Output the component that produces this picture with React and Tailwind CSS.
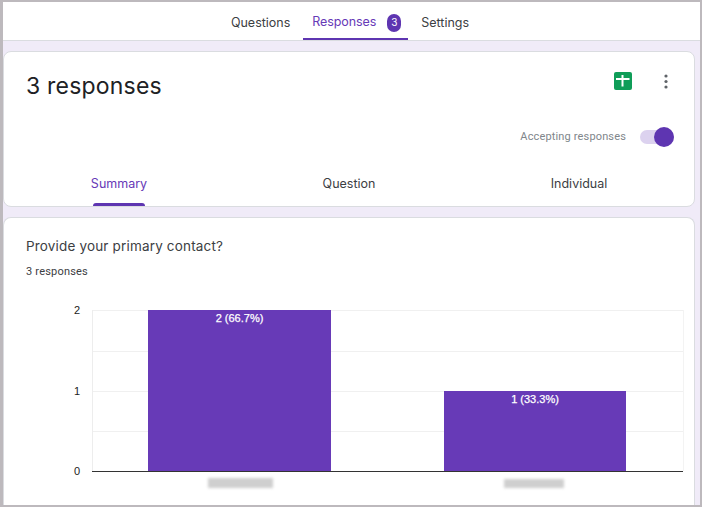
export default function App() {
  return (
    <div className="w-[702px] h-[507px] overflow-hidden flex flex-col bg-[#f0ebf8] border-t-2 border-l-[3px] border-r-[2px] border-b-[2px] border-[#bdb9bd] font-['Roboto',sans-serif]">
      <nav className="h-[39px] shrink-0 -ml-[3px] -mr-[2px] bg-white border-b border-[#dadce0] flex justify-center pl-[3px]">
        <div className="flex items-stretch text-[12.5px] font-['Inter',sans-serif]">
          <div className="flex items-center pt-[5px] px-2 mr-[5px] text-[#3c4043]">Questions</div>
          <div className="flex items-center gap-[11px] pt-[5px] pl-[9px] pr-[7px] text-[#673ab7] tracking-[-0.1px] border-b-2 border-[#5e35b1]">
            Responses
            <span className="w-[14px] h-[18px] rounded-full bg-[#5e35b1] text-white text-[10px] flex items-center justify-center">3</span>
          </div>
          <div className="flex items-center pt-[5px] px-[13px] text-[#3c4043]">Settings</div>
        </div>
      </nav>

      <div className="flex-1 flex flex-col gap-[10px] pt-[10px] pr-[5px]">
        <section className="h-[156px] shrink-0 bg-white rounded-lg border border-[#dadce0] flex flex-col">
          <div className="flex justify-between items-start pt-[18px] pl-[22px] pr-[21px]">
            <h1 className="text-[23px] leading-8 text-[#202124] font-normal tracking-[0.2px] font-['Inter',sans-serif]">3 responses</h1>
            <div className="flex items-center gap-[32px] pt-[2px]">
              <svg width="18" height="18" viewBox="0 0 18 18">
                <rect width="18" height="18" rx="2" fill="#0f9d58" />
                <path d="M2 6h5.500V3h2v3H15.500v2H9.500v6.500h-2V8H2z" fill="#fff" />
              </svg>
              <svg width="4" height="15" viewBox="0 0 4 15" fill="#5f6368" className="mr-[5px]">
                <circle cx="2" cy="2" r="1.6" />
                <circle cx="2" cy="7.500" r="1.6" />
                <circle cx="2" cy="13" r="1.6" />
              </svg>
            </div>
          </div>
          <div className="flex justify-end items-center gap-[14px] mt-[27px] pr-[20px]">
            <span className="text-[11px] text-[#80868b] tracking-[0.15px]">Accepting responses</span>
            <div className="relative w-[34px] h-[14px] rounded-full bg-[#dcd2ef]">
              <span className="absolute right-0 -top-[3px] w-5 h-5 rounded-full bg-[#5e35b1]" />
            </div>
          </div>
          <div className="mt-auto grid grid-cols-3 text-[12.5px] font-['Inter',sans-serif] h-[46px]">
            <div className="relative flex justify-center items-start pt-[15px] text-[#673ab7]">
              Summary
              <span className="absolute bottom-0 left-[89px] w-[52px] h-[3px] rounded-t bg-[#5e35b1]" />
            </div>
            <div className="flex justify-center items-start pt-[15px] text-[#3c4043]">Question</div>
            <div className="flex justify-center items-start pt-[15px] text-[#3c4043]">Individual</div>
          </div>
        </section>

        <section className="flex-1 bg-white rounded-t-lg border border-b-0 border-[#dadce0] pl-[22px] pt-[19px] min-h-0">
          <h2 className="text-[13.500px] leading-[18px] text-[#3c4043] tracking-[0.17px] font-['Inter',sans-serif]">Provide your primary contact?</h2>
          <p className="text-[11px] leading-4 mt-[9px] text-[#3c4043] tracking-[0.2px]">3 responses</p>
          <svg width="682" height="215" viewBox="0 0 682 215" className="block -ml-[23px] mt-[8px]">
            {[22, 63, 103, 143].map((y) => (
              <line key={y} x1="89" x2="680" y1={y + 0.5} y2={y + 0.5} stroke="#f0f0f0" />
            ))}
            <line x1="89.500" x2="89.500" y1="22" y2="183" stroke="#ededed" />
            <line x1="680.500" x2="680.500" y1="22" y2="183" stroke="#f3f3f3" />
            <rect x="145" y="22" width="183" height="161" fill="#673ab7" />
            <rect x="441" y="103" width="182" height="80" fill="#673ab7" />
            <line x1="89" x2="680" y1="183.500" y2="183.500" stroke="#333" />
            <g fontFamily="'Liberation Sans',sans-serif" fontSize="11" fill="#222" textAnchor="end">
              <text x="77" y="26">2</text>
              <text x="77" y="107">1</text>
              <text x="77" y="187">0</text>
            </g>
            <g fontFamily="'Liberation Sans',sans-serif" fontSize="11" fill="#fff" stroke="#fff" strokeWidth="0.25" textAnchor="middle">
              <text x="236.500" y="34">2 (66.7%)</text>
              <text x="532" y="115">1 (33.3%)</text>
            </g>
            <defs>
              <filter id="b" x="-20%" y="-50%" width="140%" height="200%">
                <feGaussianBlur stdDeviation="1.5" />
              </filter>
            </defs>
            <rect x="205" y="190" width="65" height="10" fill="#cfcfcf" filter="url(#b)" />
            <rect x="501" y="191" width="60" height="9" fill="#cfcfcf" filter="url(#b)" />
          </svg>
        </section>
      </div>
    </div>
  );
}
